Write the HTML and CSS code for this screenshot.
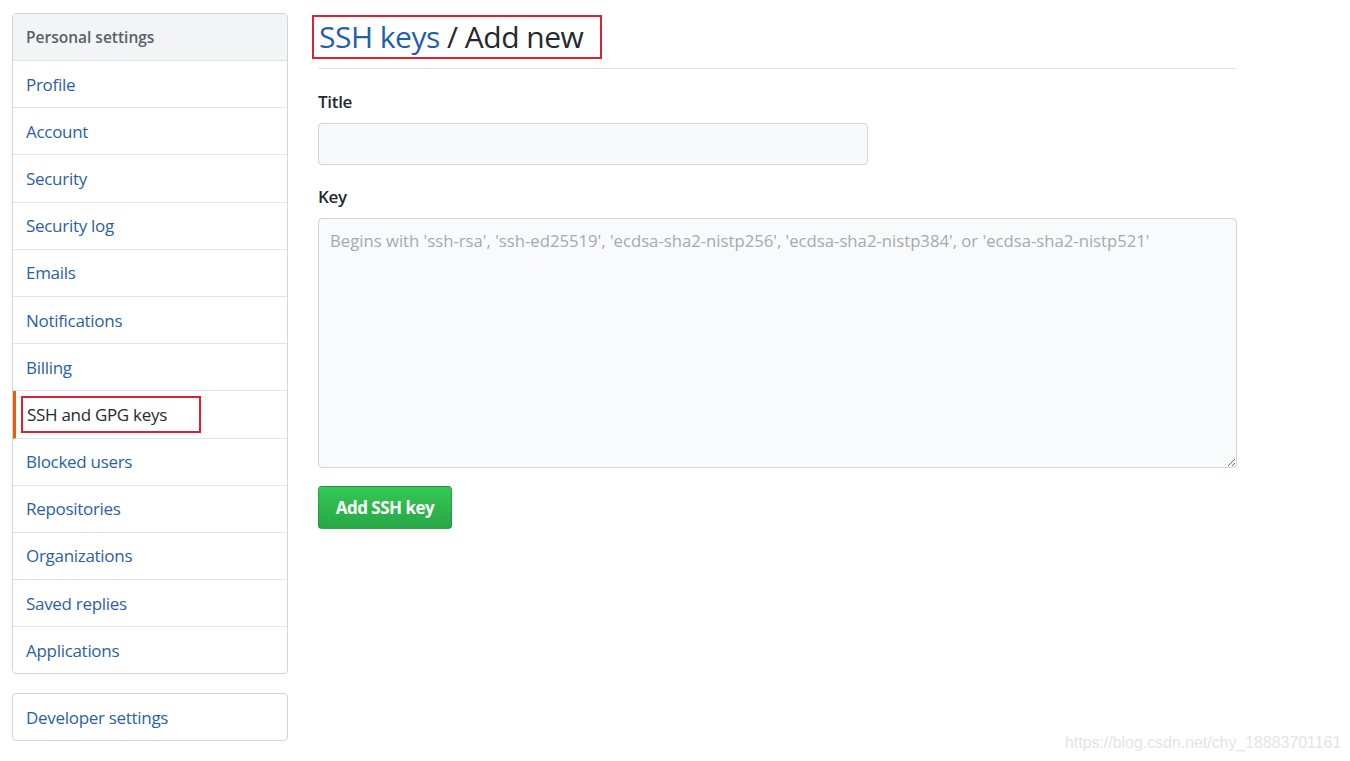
FILE: index.html
```html
<!DOCTYPE html>
<html>
<head>
<meta charset="utf-8">
<link rel="stylesheet" href="styles.css">
</head>
<body>
<div class="page">
  <aside class="side">
    <nav class="menu">
      <div class="menu-head">Personal settings</div>
      <a class="menu-item">Profile</a>
      <a class="menu-item">Account</a>
      <a class="menu-item">Security</a>
      <a class="menu-item">Security log</a>
      <a class="menu-item">Emails</a>
      <a class="menu-item">Notifications</a>
      <a class="menu-item">Billing</a>
      <a class="menu-item selected"><span class="mark">SSH and GPG keys</span></a>
      <a class="menu-item">Blocked users</a>
      <a class="menu-item">Repositories</a>
      <a class="menu-item">Organizations</a>
      <a class="menu-item">Saved replies</a>
      <a class="menu-item last">Applications</a>
    </nav>
    <nav class="menu dev">
      <a class="menu-item last">Developer settings</a>
    </nav>
  </aside>
  <main class="main">
    <div class="subhead">
      <h1 class="title"><span class="mark-h"><a class="crumb">SSH keys</a> / Add new</span></h1>
    </div>
    <form class="form">
      <label class="label">Title</label>
      <input class="input" type="text">
      <label class="label key">Key</label>
      <textarea class="textarea" placeholder="Begins with 'ssh-rsa', 'ssh-ed25519', 'ecdsa-sha2-nistp256', 'ecdsa-sha2-nistp384', or 'ecdsa-sha2-nistp521'"></textarea>
      <div class="actions"><button class="btn" type="button">Add SSH key</button></div>
    </form>
  </main>
</div>
<div class="watermark">https://blog.csdn.net/chy_18883701161</div>
</body>
</html>
```
FILE: styles.css
```css
* { box-sizing: border-box; }
html, body { margin: 0; padding: 0; background: #fff; }
body {
  font-family: "Open Sans", "Noto Sans", "Liberation Sans", sans-serif;
  color: #24292e;
  width: 1350px;
  height: 761px;
  overflow: hidden;
  position: relative;
}
.page {
  display: flex;
  gap: 30px;
  padding: 13px 0 0 12px;
}
.side { width: 276px; flex: none; display: flex; flex-direction: column; gap: 19px; }
.menu {
  border: 1px solid #d1d5da;
  border-radius: 4px;
  display: flex;
  flex-direction: column;
  overflow: hidden;
}
.menu-head {
  background: #f3f4f6;
  color: #586069;
  font-weight: 600;
  font-size: 15.5px;
  height: 47px;
  line-height: 46px;
  padding-left: 13px;
  border-bottom: 1px solid #e1e4e8;
}
.menu-item {
  display: flex;
  align-items: center;
  height: 47.2px;
  padding-left: 13px;
  font-size: 17px;
  color: #2a5fa8;
  border-bottom: 1px solid #e1e4e8;
  letter-spacing: -0.3px;
}
.menu-item.last { border-bottom: 0; height: 46px; }
.menu-item.selected {
  color: #24292e;
  border-left: 3px solid #e36209;
  padding-left: 5px;
}
.mark {
  display: inline-block;
  border: 2px solid #d9232e;
  padding: 5px 32px 5px 4px;
  margin-top: 1px;
}
.main { width: 919px; flex: none; }
.subhead {
  border-bottom: 1px solid #e1e4e8;
  padding: 2px 0 9px 0;
  margin-bottom: 21px;
}
.title {
  margin: 0;
  font-weight: 400;
  font-size: 30px;
  line-height: 40px;
  letter-spacing: -0.5px;
}
.mark-h {
  display: inline-block;
  border: 2px solid #d9232e;
  padding: 0 17px 0 5px;
  margin-left: -6px;
}
.crumb { color: #1f5fae; }
.form { display: flex; flex-direction: column; }
.label {
  font-weight: 600;
  font-size: 17px;
  line-height: 24px;
  margin-bottom: 9px;
  letter-spacing: -0.3px;
}
.label.key { margin-top: 20px; }
.input {
  width: 550px;
  height: 42px;
  background: #f6f8fa;
  border: 1px solid #d1d5da;
  border-radius: 4px;
}
.textarea {
  width: 919px;
  height: 250px;
  background: #f9fafb;
  border: 1px solid #d1d5da;
  border-radius: 4px;
  padding: 10px 11px;
  font-family: "Open Sans", "Noto Sans", sans-serif;
  font-size: 16.7px;
  resize: vertical;
}
.textarea::placeholder { color: #a3aab1; }
.actions { margin-top: 18px; }
.btn {
  width: 134px;
  height: 43px;
  background: linear-gradient(#34c856, #28a745);
  border: 1px solid rgba(27,31,35,0.2);
  border-radius: 4px;
  color: #fff;
  font-family: "Open Sans", "Noto Sans", sans-serif;
  font-weight: 700;
  font-size: 17px;
  letter-spacing: -0.5px;
  padding: 0;
}
.watermark {
  position: absolute;
  left: 1065px;
  top: 734px;
  font-family: "Liberation Sans", Arial, sans-serif;
  font-size: 15.9px;
  color: #e4e4e4;
  white-space: nowrap;
}
```
